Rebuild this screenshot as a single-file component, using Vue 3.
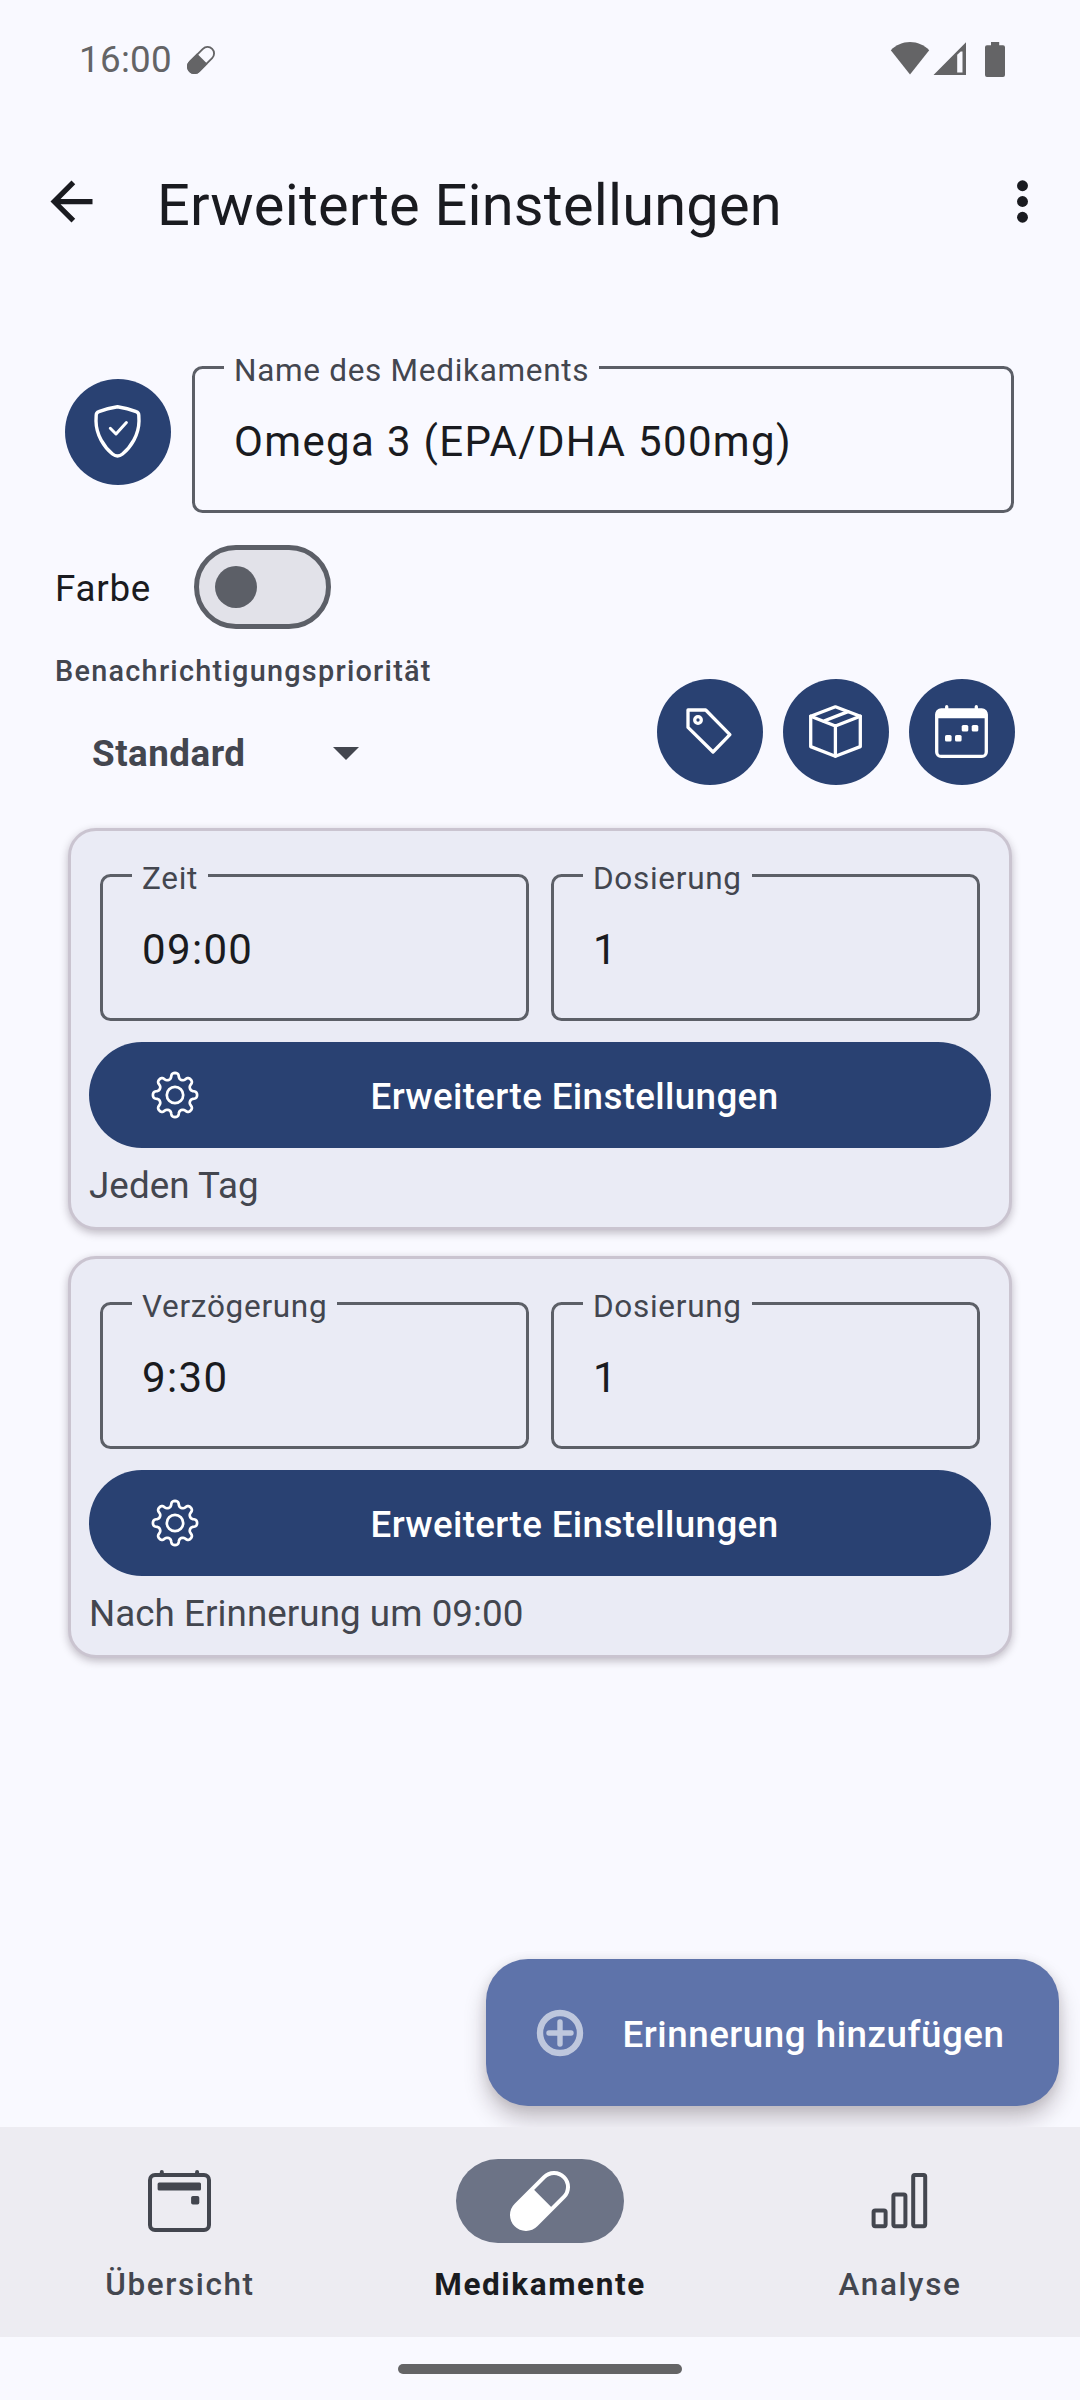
<script setup>
import { ref } from 'vue'

const medicineName = ref('Omega 3 (EPA/DHA 500mg)')

const reminders = ref([
  { label: 'Zeit', value: '09:00', amount: '1', summary: 'Jeden Tag' },
  { label: 'Verzögerung', value: '9:30', amount: '1', summary: 'Nach Erinnerung um 09:00' },
])

// Wavy outline of the settings gear: eight lobes around a circle.
const gearPath = (() => {
  const steps = 160
  const points = []
  for (let i = 0; i < steps; i++) {
    const a = (i / steps) * Math.PI * 2
    const wave = Math.cos(8 * a)
    const r = 19.2 + 2.9 * wave
    const b = a + 0.035 * Math.sin(16 * a)
    points.push(`${(24 + r * Math.sin(b)).toFixed(2)} ${(24 - r * Math.cos(b)).toFixed(2)}`)
  }
  return `M${points.join('L')}Z`
})()
</script>

<template>
  <div class="screen">
    <div class="status">
      <span class="clock">16:00</span>
      <svg class="status-pill" width="28" height="28" viewBox="0 0 60 60">
        <g transform="rotate(-45 30 30)">
          <rect x="-3.8" y="16" width="67.6" height="28" rx="14" fill="none" stroke="currentColor" stroke-width="4" />
          <path d="M33.7 14H10a16 16 0 0 0 0 32h23.7z" fill="currentColor" />
        </g>
      </svg>
      <svg class="status-icons" width="116" height="36" viewBox="0 0 116 36">
        <path d="M0.8 9.2C6 4 12.500 1 20 1s14 3 19.200 8.200L20 33.500z" fill="currentColor" />
        <path d="M76 1.200V34H43.500zM67.200 13.800V31.500h5.300V10.500l-1.800 0z" fill="currentColor" fill-rule="evenodd" />
        <path d="M101 1h8.200v3.200h3.800q2 0 2 2V34q0 2-2 2H97q-2 0-2-2V6.200q0-2 2-2h4z" fill="currentColor" />
      </svg>
    </div>

    <header class="appbar">
      <svg class="back" width="63" height="63" viewBox="0 0 24 24">
        <path d="M20 11H7.830l5.590-5.590L12 4l-8 8 8 8 1.410-1.410L7.830 13H20z" fill="currentColor" />
      </svg>
      <h1>Erweiterte Einstellungen</h1>
      <svg class="more" width="63" height="63" viewBox="0 0 24 24" fill="currentColor">
        <circle cx="12" cy="6" r="2.080" />
        <circle cx="12" cy="12" r="2.080" />
        <circle cx="12" cy="18" r="2.080" />
      </svg>
    </header>

    <main class="content">
      <div class="name-row">
        <button class="round">
          <svg width="106" height="106" viewBox="0 0 106 106">
            <path d="M52.500 27.800Q42 29.400 33.800 32.700Q31.300 33.600 31.200 36.200L31 42C31.200 56 39 68 47.500 75Q52.500 79 57.500 75C66 68 73.800 56 74 42L73.800 36.200Q73.700 33.600 71.200 32.700Q63 29.400 52.500 27.800Z" stroke-width="3.400" />
            <path d="M45.300 49.300L51 55L61.400 43.600" stroke-width="3" />
          </svg>
        </button>
        <fieldset class="field">
          <legend>Name des Medikaments</legend>
          <div class="value">{{ medicineName }}</div>
        </fieldset>
      </div>

      <div class="color-row">
        <span class="color-label">Farbe</span>
        <span class="switch"><i></i></span>
      </div>

      <div class="priority-row">
        <div class="priority">
          <div class="priority-label">Benachrichtigungspriorität</div>
          <div class="select">
            <span>Standard</span>
            <svg width="26" height="13" viewBox="0 0 26 13"><path d="M0 0h26L13 13z" fill="currentColor" /></svg>
          </div>
        </div>
        <div class="actions">
          <button class="round">
            <svg width="106" height="106" viewBox="0 0 106 106" stroke-width="3.300">
              <path d="M31 31H48.700L72.900 55.600L56 73L31 48.300Z" />
              <circle cx="41" cy="41" r="3.300" />
            </svg>
          </button>
          <button class="round">
            <svg width="106" height="106" viewBox="0 0 106 106" stroke-width="3.300">
              <path d="M52.400 27.800L77.300 37.200V67.600L52.400 77.300L27.700 67.600V37.200Z" />
              <path d="M27.700 37.200L52.400 47L77.300 37.200M52.400 47V77M40.300 42.300L65 32.600" />
            </svg>
          </button>
          <button class="round">
            <svg width="106" height="106" viewBox="0 0 106 106" stroke-width="3.300">
              <rect x="27.700" y="31" width="49.600" height="46.400" rx="4.500" />
              <path d="M37.700 27.700V32M67.300 27.700V32" />
              <g class="solid">
                <path d="M27 39.200V34q0-3.800 3.800-3.800h43.400q3.800 0 3.800 3.800v5.200z" />
                <rect x="52.700" y="46" width="6.600" height="6.600" rx="1.600" />
                <rect x="62.700" y="46" width="6.600" height="6.600" rx="1.600" />
                <rect x="36" y="56" width="6.600" height="6.600" rx="1.600" />
                <rect x="46" y="56" width="6.600" height="6.600" rx="1.600" />
              </g>
            </svg>
          </button>
        </div>
      </div>

      <section class="cards">
        <article v-for="r in reminders" :key="r.label" class="card">
          <div class="fields">
            <fieldset class="field">
              <legend>{{ r.label }}</legend>
              <div class="value">{{ r.value }}</div>
            </fieldset>
            <fieldset class="field">
              <legend>Dosierung</legend>
              <div class="value">{{ r.amount }}</div>
            </fieldset>
          </div>
          <button class="advanced">
            <svg width="48" height="48" viewBox="0 0 48 48">
              <path :d="gearPath" />
              <circle cx="24" cy="24" r="8.200" />
            </svg>
            <span>Erweiterte Einstellungen</span>
          </button>
          <p class="summary">{{ r.summary }}</p>
        </article>
      </section>

      <button class="fab">
        <svg width="48" height="48" viewBox="0 0 48 48">
          <circle cx="24" cy="24" r="20" stroke-width="6.400" />
          <path d="M13 24H35M24 13V35" stroke-width="5.400" />
        </svg>
        <span>Erinnerung hinzufügen</span>
      </button>
    </main>

    <nav class="nav">
      <a class="tab">
        <span class="indicator">
          <svg width="64" height="64" viewBox="0 0 64 64">
            <rect x="2" y="6" width="59" height="55" rx="5" fill="none" stroke="currentColor" stroke-width="4" />
            <path d="M13.800 6V3M49.100 6V3" stroke="currentColor" stroke-width="4" stroke-linecap="round" />
            <rect x="9.600" y="13.600" width="43.400" height="8" rx="1.500" fill="currentColor" />
            <rect x="43.100" y="27" width="8.200" height="8.600" rx="1.800" fill="currentColor" />
          </svg>
        </span>
        <span class="tab-label">Übersicht</span>
      </a>
      <a class="tab active">
        <span class="indicator">
          <svg width="60" height="60" viewBox="0 0 60 60">
            <g transform="rotate(-45 30 30)">
              <rect x="-3.800" y="16" width="67.600" height="28" rx="14" fill="none" stroke="currentColor" stroke-width="4" />
              <path d="M33.700 15H10a15 15 0 0 0 0 30h23.700z" fill="currentColor" />
            </g>
          </svg>
        </span>
        <span class="tab-label">Medikamente</span>
      </a>
      <a class="tab">
        <span class="indicator">
          <svg width="64" height="64" viewBox="0 0 64 64" fill="none" stroke="currentColor" stroke-width="4">
            <rect x="5.600" y="41.400" width="12" height="15.800" rx="1.600" />
            <rect x="25.400" y="25.500" width="12" height="31.700" rx="1.600" />
            <rect x="45.200" y="6" width="12" height="51.200" rx="1.600" />
          </svg>
        </span>
        <span class="tab-label">Analyse</span>
      </a>
    </nav>
    <div class="gesture"><i></i></div>
  </div>
</template>

<style>
body {
  margin: 0;
  background: #f9f9ff;
}
</style>

<style scoped>
.screen {
  width: 1080px;
  height: 2400px;
  display: flex;
  flex-direction: column;
  overflow: hidden;
  background: #f9f9ff;
  color: #1a1b20;
  font-family: Roboto, "Noto Sans", sans-serif;
}
svg {
  display: block;
  flex: none;
}
button {
  border: 0;
  padding: 0;
  margin: 0;
  font: inherit;
  color: #fff;
}
.status {
  height: 120px;
  flex: none;
  box-sizing: border-box;
  padding: 0 74px 2px 79px;
  display: flex;
  align-items: center;
  color: #646466;
}
.clock {
  font-size: 36.75px;
  width: 108px;
  line-height: 43px;
  letter-spacing: 0.3px;
}
.status-pill {
  margin-top: 2px;
}
.status-icons {
  margin-left: auto;
}
.appbar {
  height: 162px;
  flex: none;
  display: flex;
  align-items: center;
  padding: 0 26px 0 40px;
}
h1 {
  margin: 7px 0 0 54px;
  font-size: 57.75px;
  line-height: 68px;
  font-weight: 400;
  letter-spacing: 0.2px;
  flex: 1;
  white-space: nowrap;
}
.content {
  flex: 1;
  min-height: 0;
  display: flex;
  flex-direction: column;
  padding-top: 84px;
}
.round {
  width: 106px;
  height: 106px;
  border-radius: 50%;
  background: #294172;
  flex: none;
}
.round svg {
  fill: none;
  stroke: #fff;
  stroke-linecap: round;
  stroke-linejoin: round;
}
.round .solid {
  fill: #fff;
  stroke: none;
}
.name-row {
  display: flex;
  align-items: flex-start;
  gap: 21px;
  padding: 0 66px 0 65px;
}
.name-row .round {
  margin-top: 13px;
}
.field {
  flex: 1 1 0;
  min-width: 0;
  box-sizing: border-box;
  height: 167px;
  margin: -20px 0 0;
  padding: 0;
  border: 3px solid #5c5f67;
  border-radius: 10.5px;
}
legend {
  margin-left: 29px;
  padding: 6px 10px 0;
  font-size: 31.5px;
  line-height: 37px;
  letter-spacing: 0.7px;
  color: #43464f;
}
.value {
  margin: 28px 0 0 39px;
  font-size: 42px;
  line-height: 50px;
  letter-spacing: 1.34px;
}
.color-row {
  margin-top: 32px;
  height: 84px;
  padding-left: 55px;
  display: flex;
  align-items: center;
  font-size: 36.75px;
  letter-spacing: 0.75px;
}
.color-label {
  width: 139px;
  padding-top: 2px;
}
.switch {
  box-sizing: border-box;
  width: 137px;
  height: 84px;
  border: 5px solid #5c5f67;
  border-radius: 42px;
  background: #e2e2e9;
  display: flex;
  align-items: center;
  padding-left: 16px;
}
.switch i {
  width: 42px;
  height: 42px;
  border-radius: 50%;
  background: #5c5f67;
}
.priority-row {
  margin-top: 22px;
  display: flex;
  justify-content: space-between;
  padding: 0 65px 0 55px;
  color: #43464f;
}
.priority-label {
  font-size: 28.875px;
  line-height: 40px;
  font-weight: 500;
  letter-spacing: 1.25px;
}
.select {
  margin-top: 20px;
  height: 84px;
  width: 304px;
  padding-left: 37px;
  box-sizing: border-box;
  display: flex;
  align-items: center;
  justify-content: space-between;
  font-size: 36.75px;
  font-weight: 700;
  letter-spacing: 0.5px;
}
.actions {
  display: flex;
  gap: 20px;
  margin-top: 28px;
}
.cards {
  margin: 33px 68px 0;
  display: flex;
  flex-direction: column;
  gap: 26px;
}
.card {
  box-sizing: border-box;
  height: 402px;
  border: 3px solid #cac4d0;
  border-radius: 28px;
  background: #eaebf5;
  padding: 43px 18px 0;
  box-shadow: 0 3px 8px rgba(30, 15, 30, 0.27);
}
.fields {
  display: flex;
  gap: 22px;
  padding: 0 11px;
}
.advanced {
  margin-top: 21px;
  width: 902px;
  height: 106px;
  border-radius: 53px;
  background: #294172;
  display: flex;
  align-items: center;
}
.advanced svg {
  margin-left: 62px;
  fill: none;
  stroke: #fff;
  stroke-width: 2.700;
}
.advanced span {
  flex: 1;
  margin-left: -41px;
  padding-top: 3px;
  text-align: center;
  font-size: 36.75px;
  font-weight: 500;
  letter-spacing: 0.36px;
}
.summary {
  margin: 16px 0 0;
  font-size: 36.75px;
  line-height: 43px;
  letter-spacing: 0.06px;
  color: #43464f;
}
.fab {
  margin: auto 21px 21px auto;
  width: 573px;
  height: 147px;
  flex: none;
  border-radius: 42px;
  background: #5e73aa;
  display: flex;
  align-items: center;
  box-shadow: 0 14px 22px rgba(30, 15, 20, 0.23), 0 2px 12px rgba(30, 15, 20, 0.1);
}
.fab svg {
  margin-left: 49.5px;
  fill: none;
  stroke: #fff;
  stroke-linecap: round;
  opacity: 0.6;
}
.fab span {
  margin-left: 39px;
  padding-top: 4px;
  font-size: 36.75px;
  font-weight: 500;
  letter-spacing: 0.52px;
  white-space: nowrap;
}
.nav {
  position: relative;
  height: 210px;
  flex: none;
  display: flex;
  background: #edecf2;
  color: #43464f;
}
.tab {
  flex: 1 1 0;
  display: flex;
  flex-direction: column;
  align-items: center;
  padding-top: 32px;
}
.indicator {
  width: 168px;
  height: 84px;
  border-radius: 42px;
  display: flex;
  align-items: center;
  justify-content: center;
}
.tab-label {
  margin-top: 23px;
  font-size: 31.5px;
  line-height: 37px;
  font-weight: 500;
  letter-spacing: 1.6px;
}
.active .indicator {
  background: #6c7386;
  color: #fff;
}
.active .tab-label {
  color: #1a1b20;
  font-weight: 700;
}
.gesture {
  height: 63px;
  flex: none;
  display: flex;
  justify-content: center;
  padding-top: 27px;
  box-sizing: border-box;
}
.gesture i {
  width: 284px;
  height: 10px;
  border-radius: 5px;
  background: #646466;
}
</style>
